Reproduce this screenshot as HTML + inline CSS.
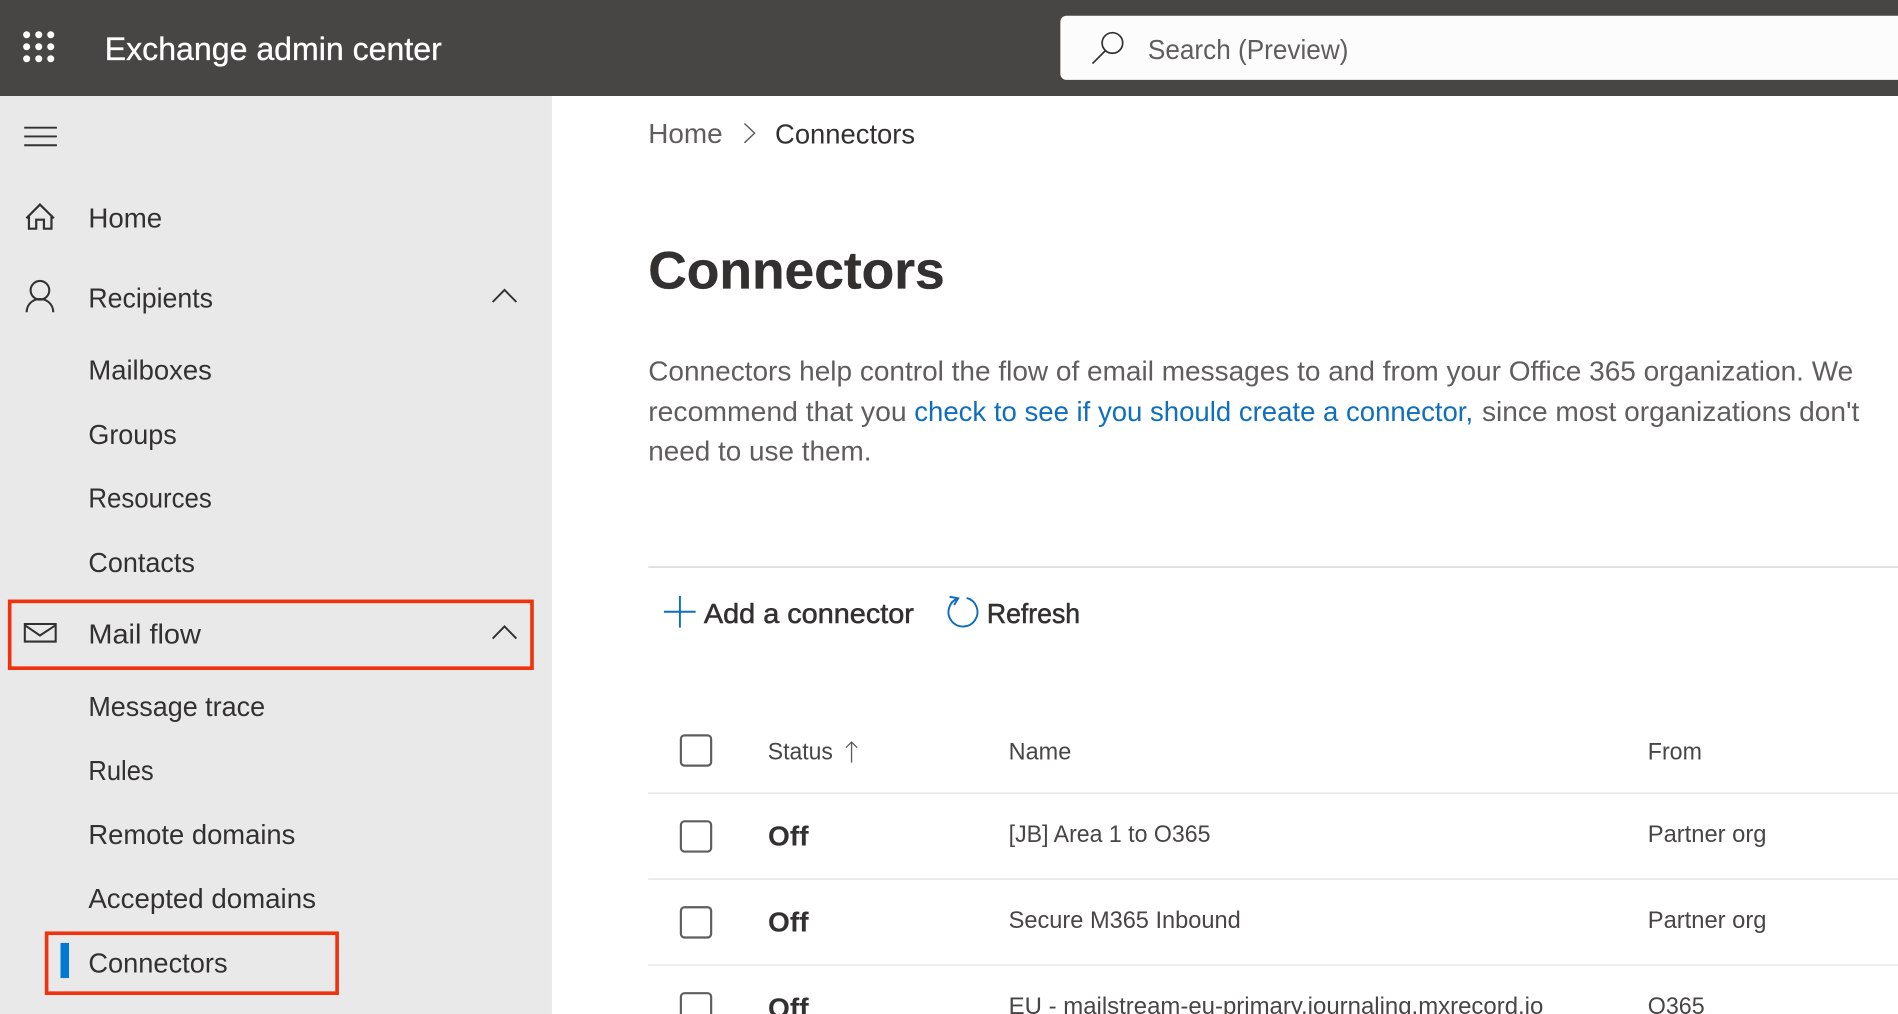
<!DOCTYPE html>
<html lang="en"><head><meta charset="utf-8"><title>Exchange admin center</title>
<style>
html,body{margin:0;padding:0;background:#fff;width:1898px;height:1014px;overflow:hidden}
svg{display:block}
text{font-family:"Liberation Sans",sans-serif;font-size:23px;fill:#323130}
.g{fill:#605e5c}
.sb{stroke:#323130;stroke-width:.45px}
.h{font-size:20px;fill:#484644}
.r{font-size:20px;fill:#484644}
.o{font-size:23px;font-weight:700;fill:#323130}
.i{fill:none;stroke:#323130;stroke-width:1.6}
.c{fill:#fff;stroke:#605e5c;stroke-width:1.8}
.l{stroke:#edebe9;stroke-width:1.5}
</style></head><body>
<svg width="1898" height="1014" viewBox="0 0 1568 837.7" xmlns="http://www.w3.org/2000/svg">
<rect width="1568" height="838" fill="#fff"/>
<rect x="0" y="79" width="456" height="759" fill="#e9e9e9"/>
<rect width="1568" height="79.300" fill="#484644"/>
<g fill="#fff"><circle cx="22" cy="28.700" r="2.9"/><circle cx="32" cy="28.700" r="2.9"/><circle cx="41.900" cy="28.700" r="2.9"/><circle cx="22" cy="38.600" r="2.9"/><circle cx="32" cy="38.600" r="2.9"/><circle cx="41.900" cy="38.600" r="2.9"/><circle cx="22" cy="48.500" r="2.9"/><circle cx="32" cy="48.500" r="2.9"/><circle cx="41.900" cy="48.500" r="2.9"/></g>
<text x="86.500" y="49.500" textLength="278.500" lengthAdjust="spacingAndGlyphs" style="font-size:26.500px;fill:#fff;stroke:#fff;stroke-width:.25px">Exchange admin center</text>
<rect x="876" y="13" width="720" height="53" rx="5" fill="#fcfcfc"/>
<g class="i" style="stroke-width:1.4"><circle cx="919" cy="35.500" r="8.500"/><path d="M913 42L902.500 52.500"/></g>
<text class="g" x="948.300" y="48.700" textLength="165.700" lengthAdjust="spacingAndGlyphs">Search (Preview)</text>

<path class="i" d="M20 105.500H47M20 112.700H47M20 120H47"/>
<path class="i" style="stroke-width:1.8" d="M21.800 180.300L33 169L44.500 180.300M23.900 177.500V188.900H29.900V181.500H36.300V188.900H42.500V177.500"/>
<text x="73" y="188" textLength="61" lengthAdjust="spacingAndGlyphs">Home</text>
<circle class="i" style="stroke-width:1.7" cx="33" cy="239.800" r="7.700"/>
<path class="i" style="stroke-width:1.7" d="M22 258C22 251.500 27 247 33 247C39 247 44 251.500 44 258"/>
<text x="73" y="254" textLength="103" lengthAdjust="spacingAndGlyphs">Recipients</text>
<path class="i" d="M407 249.500L416.800 239.500L426.600 249.500"/>
<text x="73" y="313.600" textLength="102" lengthAdjust="spacingAndGlyphs">Mailboxes</text>
<text x="73" y="366.600" textLength="73" lengthAdjust="spacingAndGlyphs">Groups</text>
<text x="73" y="419.400" textLength="102" lengthAdjust="spacingAndGlyphs">Resources</text>
<text x="73" y="472.400" textLength="88" lengthAdjust="spacingAndGlyphs">Contacts</text>

<rect x="8" y="496.800" width="431.500" height="55.200" fill="none" stroke="#f0320f" stroke-width="3"/>
<path class="i" style="stroke-width:1.7" d="M20.500 515.500H46V530H20.500ZM20.500 516.500L33 525L46 516.500"/>
<text x="73" y="531.700" textLength="93" lengthAdjust="spacingAndGlyphs">Mail flow</text>
<path class="i" d="M407 527.500L416.800 517.500L426.600 527.500"/>
<text x="73" y="591.600" textLength="146" lengthAdjust="spacingAndGlyphs">Message trace</text>
<text x="73" y="644.500" textLength="54" lengthAdjust="spacingAndGlyphs">Rules</text>
<text x="73" y="697.300" textLength="171" lengthAdjust="spacingAndGlyphs">Remote domains</text>
<text x="73" y="750.300" textLength="188" lengthAdjust="spacingAndGlyphs">Accepted domains</text>
<rect x="38.500" y="771" width="240" height="49.500" fill="none" stroke="#f0320f" stroke-width="3"/>
<rect x="50" y="779" width="7" height="29" fill="#0078d4"/>
<text x="73" y="803.300" textLength="115" lengthAdjust="spacingAndGlyphs">Connectors</text>

<text class="g" x="535.500" y="118" textLength="61.500" lengthAdjust="spacingAndGlyphs">Home</text>
<path d="M615 102L623.400 110L615 118" fill="none" stroke="#605e5c" stroke-width="1.2"/>
<text x="640.300" y="118.400" textLength="115.700" lengthAdjust="spacingAndGlyphs">Connectors</text>
<text x="535.500" y="238.300" textLength="245" lengthAdjust="spacingAndGlyphs" style="font-size:44px;font-weight:700;fill:#323130;stroke:#323130;stroke-width:.3px">Connectors</text>

<text class="g" x="535.500" y="314.300" textLength="995.500" lengthAdjust="spacingAndGlyphs">Connectors help control the flow of email messages to and from your Office 365 organization. We</text>
<text class="g" x="535.500" y="347.700" textLength="213.500" lengthAdjust="spacingAndGlyphs">recommend that you</text>
<text x="755.300" y="347.700" textLength="461.700" lengthAdjust="spacingAndGlyphs" style="fill:#106ebe">check to see if you should create a connector,</text>
<text class="g" x="1224.300" y="347.700" textLength="311.700" lengthAdjust="spacingAndGlyphs">since most organizations don't</text>
<text class="g" x="535.500" y="380.500" textLength="184.500" lengthAdjust="spacingAndGlyphs">need to use them.</text>

<line x1="535.500" y1="468.500" x2="1568" y2="468.500" stroke="#e1dfdd" stroke-width="1.5"/>
<path d="M548.500 505.400H574.700M561.700 492.300V518.500" stroke="#106ebe" stroke-width="1.6" fill="none"/>
<text class="sb" x="581.500" y="514.500" textLength="173.500" lengthAdjust="spacingAndGlyphs">Add a connector</text>
<path d="M791.500 494.300A12 12 0 1 0 798.600 494" stroke="#106ebe" stroke-width="1.6" fill="none"/>
<path d="M784.500 493L791.600 494.300L788.200 499.800" stroke="#106ebe" stroke-width="1.6" fill="none"/>
<text class="sb" x="815.300" y="514.500" textLength="77" lengthAdjust="spacingAndGlyphs">Refresh</text>

<rect class="c" x="562.500" y="607.500" width="25" height="25" rx="3"/>
<text class="h" x="634.300" y="627.600" textLength="53.700" lengthAdjust="spacingAndGlyphs">Status</text>
<path d="M703.500 630V613M698.800 617.700L703.500 613L708.200 617.700" stroke="#605e5c" stroke-width="1.1" fill="none"/>
<text class="h" x="833.300" y="627.600" textLength="51.700" lengthAdjust="spacingAndGlyphs">Name</text>
<text class="h" x="1361.300" y="627.600" textLength="44.700" lengthAdjust="spacingAndGlyphs">From</text>
<line class="l" x1="535.500" y1="655.200" x2="1568" y2="655.200"/>

<rect class="c" x="562.500" y="678.500" width="25" height="25" rx="3"/>
<text class="o" x="634.500" y="698.700" textLength="33.500" lengthAdjust="spacingAndGlyphs">Off</text>
<text class="r" x="833.300" y="695.600" textLength="166.700" lengthAdjust="spacingAndGlyphs">[JB] Area 1 to O365</text>
<text class="r" x="1361.300" y="695.600" textLength="98" lengthAdjust="spacingAndGlyphs">Partner org</text>
<line class="l" x1="535.500" y1="726.200" x2="1568" y2="726.200"/>

<rect class="c" x="562.500" y="749.500" width="25" height="25" rx="3"/>
<text class="o" x="634.500" y="769.700" textLength="33.500" lengthAdjust="spacingAndGlyphs">Off</text>
<text class="r" x="833.300" y="766.600" textLength="191.700" lengthAdjust="spacingAndGlyphs">Secure M365 Inbound</text>
<text class="r" x="1361.300" y="766.600" textLength="98" lengthAdjust="spacingAndGlyphs">Partner org</text>
<line class="l" x1="535.500" y1="797.200" x2="1568" y2="797.200"/>

<rect class="c" x="562.500" y="820.500" width="25" height="25" rx="3"/>
<text class="o" x="634.500" y="840.700" textLength="33.500" lengthAdjust="spacingAndGlyphs">Off</text>
<text class="r" x="833.300" y="837.600" textLength="441.700" lengthAdjust="spacingAndGlyphs">EU - mailstream-eu-primary.journaling.mxrecord.io</text>
<text class="r" x="1361.300" y="837.600" textLength="47" lengthAdjust="spacingAndGlyphs">O365</text>
</svg>
</body></html>
